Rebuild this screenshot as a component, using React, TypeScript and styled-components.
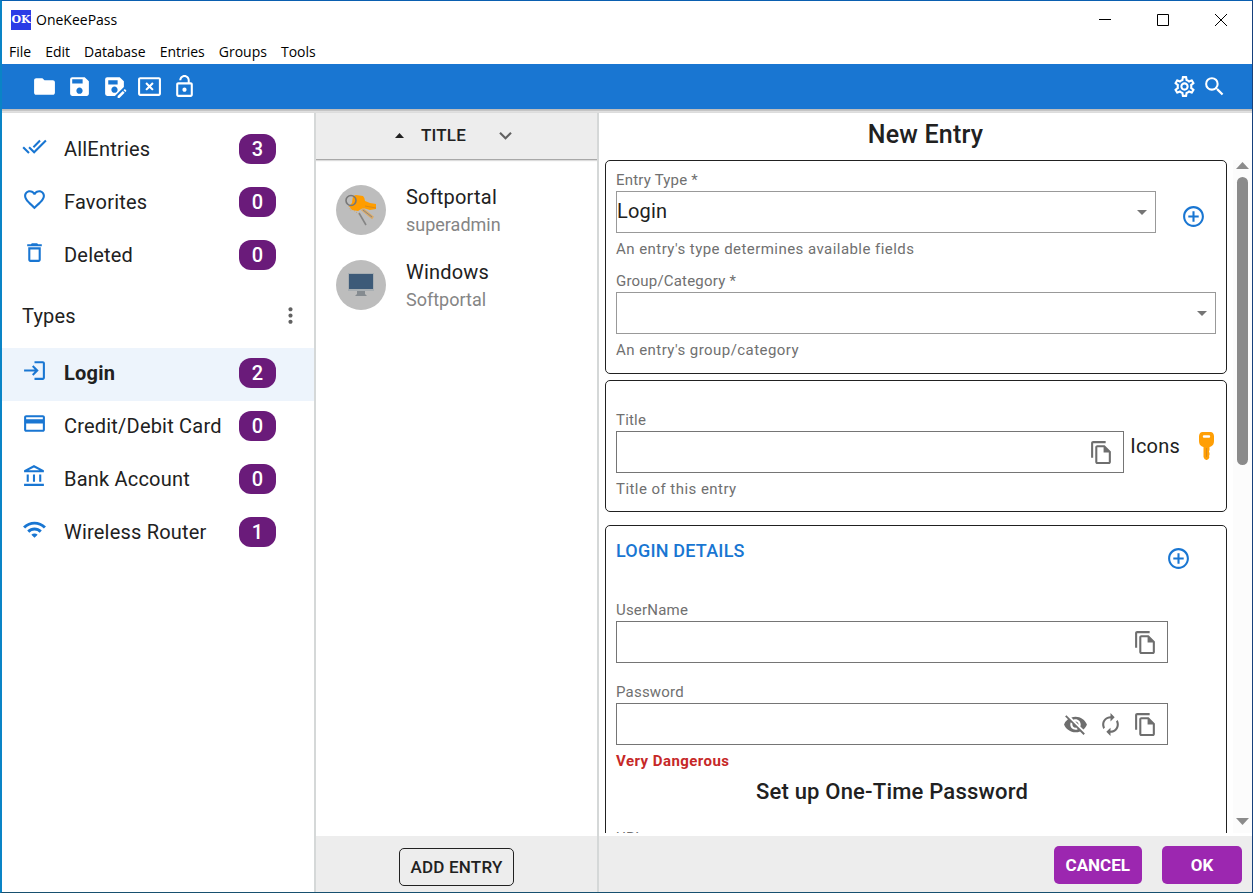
import React from "react";
import styled, { createGlobalStyle } from "styled-components";
import type { IconType } from "react-icons";
import {
  MdAutorenew,
  MdControlPoint,
  MdCreditCard,
  MdDeleteOutline,
  MdDoneAll,
  MdExpandMore,
  MdFavoriteBorder,
  MdFolder,
  MdLockOpen,
  MdLogin,
  MdMoreVert,
  MdOutlineAccountBalance,
  MdOutlineCancelPresentation,
  MdOutlineFileCopy,
  MdOutlineSettings,
  MdSave,
  MdSaveAs,
  MdSearch,
  MdVisibilityOff,
  MdWifi,
} from "react-icons/md";

const ink = "#212121";
const muted = "#707070";
const primary = "#1976d2";
const panel = "#ededed";
const divider = "#d5d8d8";

const GlobalStyle = createGlobalStyle`
  * { box-sizing: border-box; }
  body { margin: 0; background: #fff; color: ${ink}; font-family: Roboto, sans-serif; font-size: 20px; line-height: 30px; letter-spacing: 0.01em; }
  button, input, select { font: inherit; letter-spacing: inherit; color: inherit; }
  button { cursor: pointer; border: 0; padding: 0; background: none; }
  h1, h2, h3, p, ul { margin: 0; padding: 0; }
  ul { list-style: none; }
  svg { display: block; flex: none; }
`;

const Window = styled.div`
  height: 100vh;
  display: flex;
  flex-direction: column;
  border-style: solid;
  border-width: 1px 1px 1px 2px;
  border-color: #0a5fb0 #16407c #17506f #0a84c6;
  overflow: hidden;
`;

const TitleBar = styled.header`
  flex: none;
  height: 38px;
  display: flex;
  align-items: center;
  padding: 0 2px 0 9px;
  font: 14px/20px "Open Sans", sans-serif;
  letter-spacing: 0;
  color: #000;
`;

const Logo = styled.span`
  width: 20px;
  height: 20px;
  margin-right: 5px;
  background: #2b3ce6;
  color: #fff;
  font: bold 11px/20px "DejaVu Serif", serif;
  text-align: center;
`;

const WindowButtons = styled.div`
  margin-left: auto;
  display: flex;
`;

const WindowButton = styled.button`
  width: 58px;
  height: 38px;
  display: flex;
  align-items: center;
  justify-content: center;
`;

const MenuBar = styled.nav`
  flex: none;
  height: 25px;
  display: flex;
  gap: 14px;
  padding-left: 7px;
  font: 14px/26px "Open Sans", sans-serif;
  letter-spacing: 0;
  color: #000;
`;

const MenuButton = styled.button`
  height: 25px;
`;

const Toolbar = styled.div`
  flex: none;
  height: 45px;
  display: flex;
  align-items: center;
  padding: 0 23px 0 25px;
  background: ${primary};
  color: #fff;
`;

const ToolButton = styled.button<{ $width: number }>`
  width: ${(p) => p.$width}px;
  height: 35px;
  display: flex;
  align-items: center;
  justify-content: center;
`;

const Spacer = styled.span`
  flex: 1;
`;

const ToolbarShade = styled.div`
  flex: none;
  height: 4px;
  background: linear-gradient(#b9b9b9, #c9c9c9 50%, #e2e2e2 50%, #dadada);
`;

const Body = styled.div`
  flex: 1;
  min-height: 0;
  display: flex;
`;

const Sidebar = styled.aside`
  flex: none;
  width: 314px;
  padding-top: 11px;
  border-right: 2px solid ${divider};
`;

const NavButton = styled.button<{ $selected?: boolean }>`
  width: 100%;
  height: 53px;
  display: flex;
  align-items: center;
  padding: 0 38px 4px 20px;
  text-align: left;
  background: ${(p) => (p.$selected ? "#edf4fc" : "transparent")};
  font-weight: ${(p) => (p.$selected ? 700 : 400)};
`;

const NavIcon = styled.span`
  padding-bottom: 4px;
  margin-right: 17px;
  color: ${primary};
`;

const NavLabel = styled.span`
  flex: 1;
  white-space: nowrap;
`;

const Badge = styled.span`
  width: 37px;
  height: 30px;
  border-radius: 12px;
  background: #6a1b7a;
  color: #fff;
  font-weight: 500;
  text-align: center;
`;

const TypesHeader = styled.div`
  height: 65px;
  display: flex;
  align-items: center;
  justify-content: space-between;
  padding: 0 11px 0 20px;
`;

const SectionTitle = styled.h2`
  font-size: 20px;
  font-weight: 400;
`;

const MoreButton = styled.button`
  color: #616161;
`;

const ListColumn = styled.section`
  flex: none;
  width: 283px;
  display: flex;
  flex-direction: column;
  border-right: 2px solid ${divider};
`;

const SortBar = styled.div`
  flex: none;
  height: 47px;
  display: flex;
  align-items: center;
  justify-content: center;
  padding-bottom: 2px;
  background: ${panel};
  border-bottom: 1px solid #a8a8a8;
  box-shadow: 0 1px 1px #dcdcdc;
`;

const SortButton = styled.button`
  display: flex;
  align-items: center;
  gap: 17px;
  font-size: 17px;
  font-weight: 500;
`;

const SortMenuButton = styled.button`
  margin-left: 27px;
  color: #616161;
`;

const EntryList = styled.ul`
  flex: 1;
  padding-top: 12px;
`;

const EntryButton = styled.button`
  width: 100%;
  height: 75px;
  display: flex;
  align-items: center;
  gap: 20px;
  padding: 0 20px;
  text-align: left;
`;

const Avatar = styled.span`
  width: 50px;
  height: 50px;
  display: flex;
  align-items: center;
  justify-content: center;
  border-radius: 50%;
  background: #bdbdbd;
`;

const EntryTitle = styled.span`
  display: block;
  padding-top: 2px;
  line-height: 28px;
`;

const EntrySubtitle = styled.span`
  display: block;
  font-size: 18px;
  line-height: 27px;
  letter-spacing: 0;
  color: #858585;
`;

const Footer = styled.footer<{ $align: string }>`
  flex: none;
  height: 56px;
  display: flex;
  align-items: center;
  justify-content: ${(p) => p.$align};
  gap: 20px;
  padding: 2px 10px 0;
  background: ${panel};
`;

const OutlinedButton = styled.button`
  height: 38px;
  margin-top: 4px;
  padding: 0 11px;
  border: 1px solid ${ink};
  border-radius: 5px;
  font-size: 17px;
  font-weight: 500;
`;

const ContainedButton = styled.button`
  height: 38px;
  min-width: 80px;
  padding: 0 12px;
  border-radius: 5px;
  background: #9c27b0;
  color: #fff;
  font-size: 17px;
  font-weight: 700;
  letter-spacing: 0;
`;

const FormColumn = styled.form`
  flex: 1;
  min-width: 0;
  display: flex;
  flex-direction: column;
`;

const FormTitle = styled.h1`
  flex: none;
  height: 47px;
  font-size: 25px;
  font-weight: 500;
  line-height: 44px;
  text-align: center;
`;

const ScrollRegion = styled.div`
  flex: 1;
  min-height: 0;
  display: flex;
  margin-bottom: 3px;
`;

const Cards = styled.div`
  flex: 1;
  min-width: 0;
  overflow: hidden;
  padding: 0 6px;
`;

const Card = styled.section<{ $top: number; $bottom?: number; $gap: number }>`
  padding: ${(p) => p.$top}px 10px ${(p) => p.$bottom ?? 10}px;
  margin-bottom: ${(p) => p.$gap}px;
  border: 1px solid ${ink};
  border-radius: 5px;
`;

const Row = styled.div<{ $align: string }>`
  display: flex;
  align-items: ${(p) => p.$align};
`;

const Field = styled.div<{ $mt?: number }>`
  flex: 1;
  min-width: 0;
  margin-top: ${(p) => p.$mt ?? 0}px;
`;

const Label = styled.label`
  display: block;
  font-size: 15px;
  line-height: 22px;
  color: ${muted};
`;

const Control = styled.div<{ $tone: string }>`
  position: relative;
  height: 42px;
  display: flex;
  align-items: center;
  border: 1px solid ${(p) => p.$tone};
  background: #fff;
`;

const Select = styled.select`
  flex: 1;
  height: 40px;
  padding: 0 32px 2px 0;
  border: 0;
  outline: 0;
  appearance: none;
  background: transparent;
`;

const SelectArrow = styled.span`
  position: absolute;
  right: 8px;
  pointer-events: none;
`;

const Input = styled.input`
  flex: 1;
  min-width: 0;
  height: 40px;
  padding: 0;
  border: 0;
  outline: 0;
  background: transparent;
`;

const Adornments = styled.span`
  display: flex;
  gap: 10px;
  padding-right: 9px;
  color: #6e6e6e;
`;

const Helper = styled.p<{ $danger?: boolean }>`
  margin-top: 4px;
  font-size: 15px;
  line-height: 24px;
  letter-spacing: 0.03em;
  color: ${(p) => (p.$danger ? "#c62828" : muted)};
  font-weight: ${(p) => (p.$danger ? 700 : 400)};
`;

const AddButton = styled.button`
  width: 46px;
  height: 46px;
  display: flex;
  align-items: center;
  justify-content: center;
  color: ${primary};
`;

const AddTypeSlot = styled.div`
  padding: 2px 0 0 14px;
`;

const IconPicker = styled.button`
  height: 30px;
  margin: 22px 2px 0 6px;
  display: flex;
  align-items: center;
  gap: 19px;
`;

const CardHeader = styled.div`
  display: flex;
  justify-content: space-between;
  padding-right: 15px;
`;

const CardTitle = styled.h2`
  font-size: 18px;
  font-weight: 500;
  line-height: 32px;
  color: ${primary};
`;

const DetailFields = styled.div`
  padding-right: 48px;
`;

const OtpTitle = styled.h3`
  font-size: 22px;
  font-weight: 500;
  line-height: 38px;
  text-align: center;
`;

const ScrollTrack = styled.div`
  flex: none;
  width: 19px;
  display: flex;
  flex-direction: column;
  align-items: center;
  padding: 2px 0 8px;
  background: #fcfcfc;
`;

const ScrollThumb = styled.div`
  width: 11px;
  height: 288px;
  margin: 8px 0 auto;
  border-radius: 6px;
  background: #8b8b8b;
`;

const Arrow = ({ w, h, up, color }: { w: number; h: number; up?: boolean; color: string }) => (
  <svg width={w} height={h} viewBox="0 0 10 5" preserveAspectRatio="none" fill={color}>
    <path d={up ? "M0 5 5 0l5 5z" : "M0 0h10L5 5z"} />
  </svg>
);

const KeyIcon = () => (
  <svg width="15" height="28" viewBox="0 0 15 28">
    <path
      fill="#ff9f05"
      fillRule="evenodd"
      d="M3.500 0h8Q14.500 0 15 4v5q0 4-3 5.500L10.500 15v3l-.6 1.500.6 1.500v2l-.6 1 .6 1-1 2-2 1.200-2-1.200L4.500 25V15L3 14.500Q0 13 0 9V4Q.5 0 3.500 0zM5 3.200q-1.200 0-1.200 1.300T5 5.800h5q1.200 0 1.200-1.300T10 3.200z"
    />
    <path d="M7.500 16v9" stroke="#d98a1a" strokeWidth="1" fill="none" />
  </svg>
);

const KeysIcon = () => (
  <svg width="32" height="32" viewBox="0 0 32 32" fill="none">
    <path d="M14 19l7 12" stroke="#858585" strokeWidth="1.600" />
    <path d="M4 12l2 5M7 15l8 6" stroke="#c9a26d" strokeWidth="1" strokeDasharray="1 1.500" />
    <path d="M17 15l11 9" stroke="#dba964" strokeWidth="3" />
    <path d="M18 16l9 7" stroke="#858585" strokeWidth="1" />
    <path
      fill="#ff9d00"
      d="M8 2l3-1 7 1q2 2 2 5l5 2 6 1v5l-6 1-7-2-5 3-6-1-3-4 3-3z"
    />
    <path d="M20 12l11 2" stroke="#d98a1a" strokeWidth="1" />
    <circle cx="6" cy="6.500" r="5" stroke="#777" strokeWidth="1.600" />
  </svg>
);

const MonitorIcon = () => (
  <svg width="28" height="26" viewBox="0 0 28 26">
    <rect x="1" y="1" width="26" height="18" fill="#a8aeb2" />
    <rect x="2" y="2" width="24" height="15" fill="#3d5a78" />
    <path fill="#858b90" d="M10 19h8v3l2 2H8l2-2z" />
  </svg>
);

type NavEntry = { label: string; count: number; Icon: IconType; selected?: boolean };

const general: NavEntry[] = [
  { label: "AllEntries", count: 3, Icon: MdDoneAll },
  { label: "Favorites", count: 0, Icon: MdFavoriteBorder },
  { label: "Deleted", count: 0, Icon: MdDeleteOutline },
];

const types: NavEntry[] = [
  { label: "Login", count: 2, Icon: MdLogin, selected: true },
  { label: "Credit/Debit Card", count: 0, Icon: MdCreditCard },
  { label: "Bank Account", count: 0, Icon: MdOutlineAccountBalance },
  { label: "Wireless Router", count: 1, Icon: MdWifi },
];

const tools: [string, IconType][] = [
  ["Open database", MdFolder],
  ["Save", MdSave],
  ["Save as", MdSaveAs],
  ["Close database", MdOutlineCancelPresentation],
  ["Lock", MdLockOpen],
];

const menus = ["File", "Edit", "Database", "Entries", "Groups", "Tools"];

const entries = [
  { title: "Softportal", subtitle: "superadmin", Picture: KeysIcon },
  { title: "Windows", subtitle: "Softportal", Picture: MonitorIcon },
];

const NavList = ({ items }: { items: NavEntry[] }) => (
  <ul>
    {items.map(({ label, count, Icon, selected }) => (
      <li key={label}>
        <NavButton $selected={selected}>
          <NavIcon>
            <Icon size={25} />
          </NavIcon>
          <NavLabel>{label}</NavLabel>
          <Badge>{count}</Badge>
        </NavButton>
      </li>
    ))}
  </ul>
);

type TextFieldProps = {
  id: string;
  label: string;
  type?: string;
  mt?: number;
  actions?: [string, IconType][];
  children?: React.ReactNode;
};

const TextField = ({ id, label, type = "text", mt, actions = [], children }: TextFieldProps) => (
  <Field $mt={mt}>
    <Label htmlFor={id}>{label}</Label>
    <Control $tone="#757575">
      <Input id={id} type={type} />
      <Adornments>
        {actions.map(([name, Icon]) => (
          <button key={name} type="button" aria-label={name}>
            <Icon size={25} />
          </button>
        ))}
      </Adornments>
    </Control>
    {children}
  </Field>
);

const SelectField = ({
  id,
  label,
  options,
  helper,
  mt,
}: {
  id: string;
  label: string;
  options: string[];
  helper: string;
  mt?: number;
}) => (
  <Field $mt={mt}>
    <Label htmlFor={id}>{label} *</Label>
    <Control $tone="#999">
      <Select id={id} required>
        {options.map((o) => (
          <option key={o}>{o}</option>
        ))}
      </Select>
      <SelectArrow>
        <Arrow w={10} h={5} color="#757575" />
      </SelectArrow>
    </Control>
    <Helper>{helper}</Helper>
  </Field>
);

export default function App() {
  return (
    <>
      <GlobalStyle />
      <Window>
        <TitleBar>
          <Logo>OK</Logo>
          OneKeePass
          <WindowButtons>
            <WindowButton aria-label="Minimize">
              <svg width="12" height="12" stroke="#000">
                <path d="M0 5.500h12" />
              </svg>
            </WindowButton>
            <WindowButton aria-label="Maximize">
              <svg width="12" height="12" stroke="#000" fill="none">
                <path d="M.5.5h11v11H.5z" />
              </svg>
            </WindowButton>
            <WindowButton aria-label="Close">
              <svg width="12" height="12" stroke="#000">
                <path d="M0 0l12 12M12 0 0 12" />
              </svg>
            </WindowButton>
          </WindowButtons>
        </TitleBar>
        <MenuBar>
          {menus.map((m) => (
            <MenuButton key={m}>{m}</MenuButton>
          ))}
        </MenuBar>
        <Toolbar>
          {tools.map(([name, Icon]) => (
            <ToolButton key={name} $width={35} aria-label={name}>
              <Icon size={25} />
            </ToolButton>
          ))}
          <Spacer />
          <ToolButton $width={30} aria-label="Settings">
            <MdOutlineSettings size={25} />
          </ToolButton>
          <ToolButton $width={30} aria-label="Search">
            <MdSearch size={25} />
          </ToolButton>
        </Toolbar>
        <ToolbarShade />
        <Body>
          <Sidebar>
            <NavList items={general} />
            <TypesHeader>
              <SectionTitle>Types</SectionTitle>
              <MoreButton aria-label="Type options">
                <MdMoreVert size={25} />
              </MoreButton>
            </TypesHeader>
            <NavList items={types} />
          </Sidebar>
          <ListColumn>
            <SortBar>
              <SortButton>
                <Arrow w={9} h={5} up color={ink} />
                TITLE
              </SortButton>
              <SortMenuButton aria-label="Sort by">
                <MdExpandMore size={25} />
              </SortMenuButton>
            </SortBar>
            <EntryList>
              {entries.map(({ title, subtitle, Picture }) => (
                <li key={title}>
                  <EntryButton>
                    <Avatar>
                      <Picture />
                    </Avatar>
                    <span>
                      <EntryTitle>{title}</EntryTitle>
                      <EntrySubtitle>{subtitle}</EntrySubtitle>
                    </span>
                  </EntryButton>
                </li>
              ))}
            </EntryList>
            <Footer $align="center">
              <OutlinedButton>ADD ENTRY</OutlinedButton>
            </Footer>
          </ListColumn>
          <FormColumn onSubmit={(e) => e.preventDefault()}>
            <FormTitle>New Entry</FormTitle>
            <ScrollRegion>
              <Cards>
                <Card $top={8} $bottom={11} $gap={6}>
                  <Row $align="center">
                    <SelectField
                      id="entry-type"
                      label="Entry Type"
                      options={["Login"]}
                      helper="An entry's type determines available fields"
                    />
                    <AddTypeSlot>
                      <AddButton type="button" aria-label="Add entry type">
                        <MdControlPoint size={25} />
                      </AddButton>
                    </AddTypeSlot>
                  </Row>
                  <SelectField
                    id="group"
                    label="Group/Category"
                    options={[""]}
                    helper="An entry's group/category"
                    mt={9}
                  />
                </Card>
                <Card $top={28} $gap={13}>
                  <Row $align="flex-start">
                    <TextField id="title" label="Title" actions={[["Copy title", MdOutlineFileCopy]]}>
                      <Helper>Title of this entry</Helper>
                    </TextField>
                    <IconPicker type="button">
                      Icons
                      <KeyIcon />
                    </IconPicker>
                  </Row>
                </Card>
                <Card $top={9} $gap={0}>
                  <CardHeader>
                    <CardTitle>LOGIN DETAILS</CardTitle>
                    <AddButton type="button" aria-label="Add field">
                      <MdControlPoint size={25} />
                    </AddButton>
                  </CardHeader>
                  <DetailFields>
                    <TextField
                      id="username"
                      label="UserName"
                      mt={18}
                      actions={[["Copy user name", MdOutlineFileCopy]]}
                    />
                    <TextField
                      id="password"
                      label="Password"
                      type="password"
                      mt={18}
                      actions={[
                        ["Show password", MdVisibilityOff],
                        ["Generate password", MdAutorenew],
                        ["Copy password", MdOutlineFileCopy],
                      ]}
                    >
                      <Helper $danger>Very Dangerous</Helper>
                    </TextField>
                    <OtpTitle>Set up One-Time Password</OtpTitle>
                    <TextField id="url" label="URL" mt={16} />
                  </DetailFields>
                </Card>
              </Cards>
              <ScrollTrack>
                <Arrow w={13} h={7} up color="#8b8b8b" />
                <ScrollThumb />
                <Arrow w={13} h={7} color="#8b8b8b" />
              </ScrollTrack>
            </ScrollRegion>
            <Footer $align="flex-end">
              <ContainedButton type="button">CANCEL</ContainedButton>
              <ContainedButton type="submit">OK</ContainedButton>
            </Footer>
          </FormColumn>
        </Body>
      </Window>
    </>
  );
}
